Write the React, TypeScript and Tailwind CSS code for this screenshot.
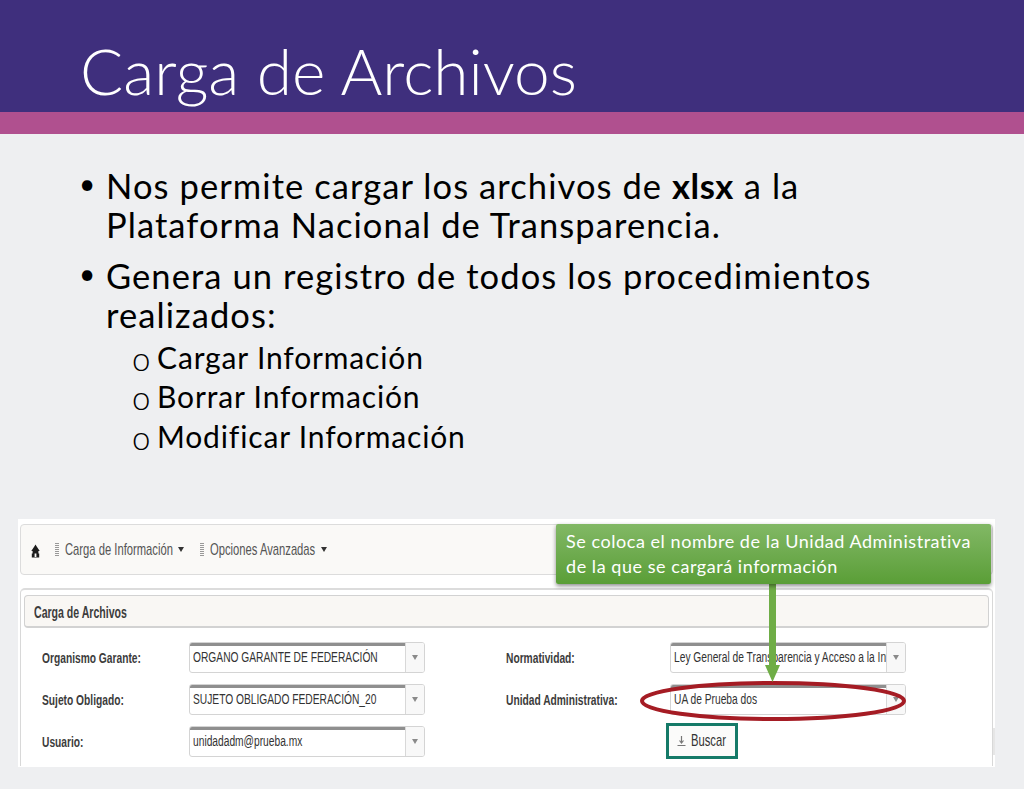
import React from "react";

function Tiny({ children, className = "" }: { children: React.ReactNode; className?: string }) {
  return (
    <span className={`inline-block origin-left scale-x-[0.66] whitespace-nowrap font-['Liberation_Sans',sans-serif] ${className}`}>
      {children}
    </span>
  );
}

function Combo({ text, w }: { text: string; w: string }) {
  return (
    <div className={`flex h-[31px] ${w} overflow-hidden rounded-[3px] border border-[#d4d4d4] bg-white`}>
      <div className="flex min-w-0 flex-1 items-center overflow-hidden border-t-[3px] border-t-[#8f8f8f] pb-[3px] pl-[3px]">
        <Tiny className="text-[15.5px] text-[#333]">{text}</Tiny>
      </div>
      <div className="flex w-[19px] items-center justify-center border-l border-[#d8d8d8] bg-[#f8f8f8]">
        <span className="h-0 w-0 border-x-[3px] border-t-[5px] border-x-transparent border-t-[#8a8a8a]" />
      </div>
    </div>
  );
}

function Field({ label, text, labelW }: { label: string; text: string; labelW: string }) {
  return (
    <div className="flex h-[42px] items-center">
      <div className={labelW}>
        <Tiny className="text-[15.5px] font-bold text-[#3c3c3c]">{label}</Tiny>
      </div>
      <Combo text={text} w="w-[236px]" />
    </div>
  );
}

function Nav({ text, w }: { text: string; w: string }) {
  return (
    <div className="flex items-center">
      <span className="mr-[6px] h-[14px] w-[4px] bg-[repeating-linear-gradient(to_bottom,#999_0,#999_1px,transparent_1px,transparent_2px)]" />
      <div className={w}>
        <Tiny className="text-[17px] text-[#555]">{text}</Tiny>
      </div>
      <span className="ml-[5px] h-0 w-0 border-x-[3.5px] border-t-[5px] border-x-transparent border-t-[#333]" />
    </div>
  );
}

function Bullet() {
  return <span className="-ml-[2px] w-[27px] text-[28px] leading-[32px] tracking-normal">•</span>;
}

export default function App() {
  return (
    <div className="flex h-[789px] w-[1024px] flex-col overflow-hidden bg-[#eeeff1] font-['Lato','Carlito',sans-serif] text-black">
      <header className="flex h-[112px] items-center bg-[#3f2f7d] pl-[80px] pt-[29px]">
        <h1 className="text-[64px] font-light leading-none text-white">Carga de Archivos</h1>
      </header>
      <div className="h-[22px] bg-[#b0508f]" />

      <main className="h-[385px] pl-[81px] pt-[33px]">
        <ul className="text-[34.500px] leading-[38.5px] tracking-[1.08px]">
          <li className="flex">
            <Bullet />
            <span>
              Nos permite cargar los archivos de <b className="tracking-[0.5px]">xlsx</b> a la
              <br />
              Plataforma Nacional de Transparencia.
            </span>
          </li>
          <li className="mt-[13px] flex">
            <Bullet />
            <span>
              Genera un registro de todos los procedimientos
              <br />
              realizados:
            </span>
          </li>
        </ul>
        <ul className="mt-[3.5px] pl-[50px] text-[30px] leading-[39.5px] tracking-[0.85px]">
          {["Cargar Información", "Borrar Información", "Modificar Información"].map((t) => (
            <li key={t} className="flex">
              <span className="w-[26px] pl-[1px] pt-[2px] text-[33px] font-light leading-[37.5px] tracking-normal">o</span>
              <span>{t}</span>
            </li>
          ))}
        </ul>
      </main>

      <section className="relative ml-[18px] h-[248px] w-[977px] bg-white px-[2px] pt-[5px]">
        <div className="flex h-[51px] items-center rounded-[4px] border border-[#dcdcdc] bg-[#faf9f7] pl-[10px]">
          <svg width="9" height="14" viewBox="0 0 9 14" className="mr-[15px] mt-[2px]">
            <path d="M4.500 0.500 3.300 2.600 0.300 7H1.600V9.500H0.800V13.500H8.200V9.500H7.400V7H8.700L5.700 2.600ZM3.600 9.500H5.400V13H3.600Z" fill="#1c1c1c" fillRule="evenodd" />
          </svg>
          <div className="flex gap-[16px]">
            <Nav text="Carga de Información" w="w-[108px]" />
            <Nav text="Opciones Avanzadas" w="w-[106px]" />
          </div>
        </div>

        <div className="mt-[13px] h-[178px] rounded-t-[5px] border-x border-t-[2px] border-x-[#d8d8d8] border-t-[#dcdcdc] px-[3px] pt-[5px]">
          <div className="flex h-[33px] items-center rounded-[4px] border border-b-2 border-[#d2d2d2] bg-[#f9f7f4] pl-[9px] pt-[3px]">
            <Tiny className="text-[16px] font-bold text-[#3c3c3c]">Carga de Archivos</Tiny>
          </div>
          <div className="flex pl-[18px] pt-[8px]">
            <div className="w-[464px]">
              <Field labelW="w-[147px]" label="Organismo Garante:" text="ORGANO GARANTE DE FEDERACIÓN" />
              <Field labelW="w-[147px]" label="Sujeto Obligado:" text="SUJETO OBLIGADO FEDERACIÓN_20" />
              <Field labelW="w-[147px]" label="Usuario:" text="unidadadm@prueba.mx" />
            </div>
            <div>
              <Field labelW="w-[164px]" label="Normatividad:" text="Ley General de Transparencia y Acceso a la Información" />
              <Field labelW="w-[164px]" label="Unidad Administrativa:" text="UA de Prueba dos" />
              <div className="flex h-[42px] items-center pl-[160px]">
                <div className="flex h-[36px] w-[72px] items-center gap-[5px] border-[3.5px] border-[#157a68] bg-[#fbfbfa] pl-[8px]">
                  <svg width="9" height="12" viewBox="0 0 9 12">
                    <path d="M4.500 1v6.500M2.500 5.500l2 2.500 2-2.500M0.500 10.500h8" fill="none" stroke="#777" strokeWidth="1.200" />
                  </svg>
                  <div className="w-[36px]">
                    <Tiny className="text-[17px] text-[#333]">Buscar</Tiny>
                  </div>
                </div>
              </div>
            </div>
          </div>
        </div>

        <div className="absolute right-0 top-[209px] h-[27px] w-[2px] bg-[#e6e6e6]" />

        <svg className="absolute left-[600px] top-[50px] h-[200px] w-[340px] overflow-visible" viewBox="0 0 340 200">
          <ellipse cx="155" cy="132" rx="131" ry="18" fill="none" stroke="#a51c24" strokeWidth="4" />
          <rect x="151" y="0" width="7" height="100" fill="#6fad46" />
          <path d="M147 96h15l-7.500 17z" fill="#6fad46" />
        </svg>

        <div className="absolute left-[538px] top-[5px] h-[60px] w-[435px] rounded-[2px] bg-gradient-to-b from-[#82b865] to-[#5a9e36] pl-[10px] pt-[5px] text-[18px] leading-[25px] tracking-[0.55px] text-white shadow-[0_2px_4px_rgba(0,0,0,0.45)]">
          <div className="whitespace-nowrap">Se coloca el nombre de la Unidad Administrativa</div>
          <div className="whitespace-nowrap">de la que se cargará información</div>
        </div>
      </section>
    </div>
  );
}
